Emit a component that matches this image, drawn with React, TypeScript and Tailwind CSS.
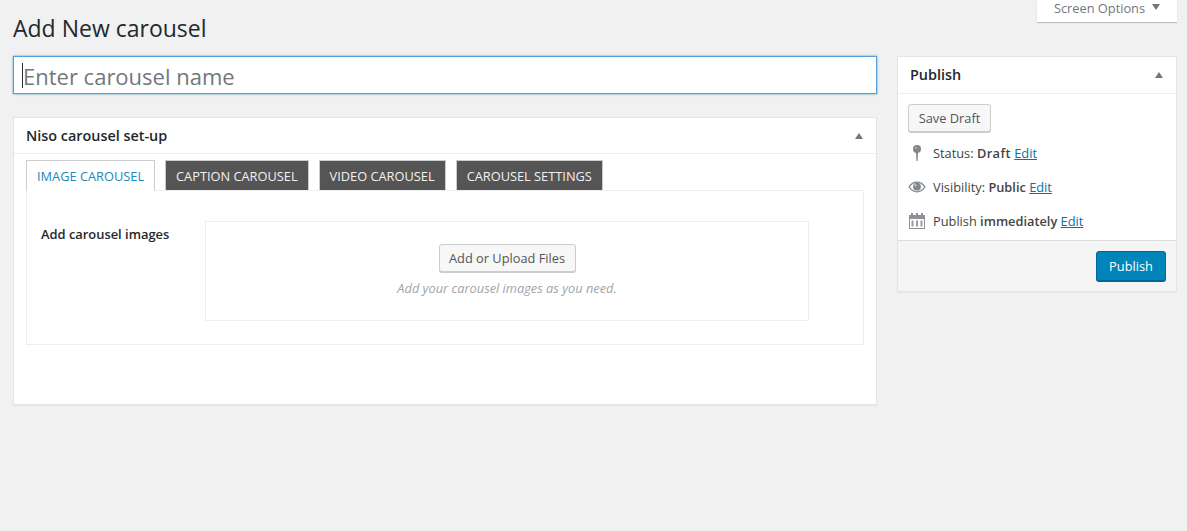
const font = { fontFamily: '"Open Sans", sans-serif' };

function Triangle({ down = false }: { down?: boolean }) {
  return (
    <svg width="8" height="6" viewBox="0 0 8 6" className="block">
      <path d={down ? "M0 0H8L4 6Z" : "M4 0L8 6H0Z"} fill="#72777c" />
    </svg>
  );
}

function PinIcon() {
  return (
    <svg width="8" height="16" viewBox="0 0 8 16">
      <circle cx="4" cy="4" r="4" fill="#82878c" />
      <circle cx="3" cy="2.8" r="0.9" fill="#c4c6c8" />
      <path d="M3 7H5L4.6 16H3.4Z" fill="#82878c" />
    </svg>
  );
}

function EyeIcon() {
  return (
    <svg width="18" height="12" viewBox="0 0 18 12">
      <path d="M0.3 6C2.5 2.4 5.5 0.6 9 0.6S15.5 2.4 17.7 6C15.5 9.6 12.5 11.4 9 11.4S2.5 9.6 0.3 6Z" fill="#82878c" />
      <path d="M1.8 6C3.7 3.3 6.1 1.8 9 1.8S14.3 3.3 16.2 6C14.3 8.7 11.9 10.2 9 10.2S3.7 8.7 1.8 6Z" fill="#fff" />
      <circle cx="9" cy="5.7" r="3.9" fill="#82878c" />
      <circle cx="7.5" cy="4.3" r="1.1" fill="#d5d6d8" />
    </svg>
  );
}

function CalendarIcon() {
  return (
    <svg width="16" height="16" viewBox="0 0 16 16">
      <path d="M0 2H2V0H4V2H7V0H9V2H12V0H14V2H16V16H0Z" fill="#8d9195" />
      <path d="M1 6H15V15H1Z" fill="#fff" />
      <path d="M2.5 7.5H4.5V13.5H2.5ZM7 7.5H9V13.5H7ZM11.5 7.5H13.5V13.5H11.5Z" fill="#9a9ea2" />
    </svg>
  );
}

function TabLink({ label }: { label: string }) {
  return (
    <div className="h-[30px] whitespace-nowrap border border-b-0 border-[#ccc] bg-[#555] px-[10px] text-[12.8px] leading-[30px] text-[#f1f1f1]">
      {label}
    </div>
  );
}

function MiscRow({ icon, children }: { icon: React.ReactNode; children: React.ReactNode }) {
  return (
    <div className="flex h-[34px] items-center text-[12.8px] leading-[18px] text-[#444]">
      <div className="flex w-[25px] shrink-0 justify-center pr-[7px]">{icon}</div>
      <div className="whitespace-pre">{children}</div>
    </div>
  );
}

function EditLink() {
  return <span className="text-[#0073aa] underline">Edit</span>;
}

export default function App() {
  return (
    <div style={font} className="h-[531px] w-[1187px] overflow-hidden bg-[#f1f1f1] text-[#23282d]">
      <div className="flex justify-end pr-[10px]">
        <div className="flex h-[22px] w-[140px] justify-center gap-[7px] bg-white text-[12.8px] leading-[16px] text-[#72777c] shadow-[0_1px_1px_rgba(0,0,0,0.2)]">
          <span>Screen Options</span>
          <div className="pt-[4px]">
            <Triangle down />
          </div>
        </div>
      </div>

      <div className="flex gap-5 pl-[13px] pr-[10px]">
        <div className="w-[864px]">
          <h1 className="h-[34px] text-[23px] leading-[12px] text-[#23282d]">Add New carousel</h1>

          <div className="flex h-[38px] items-center border border-[#5b9dd9] bg-white pl-[8px] text-[22px] text-[#72777c] shadow-[0_0_2px_rgba(30,140,190,0.8)]">
            <span className="mr-[-1px] h-[25px] w-px bg-[#23282d]" />
            <span className="pl-px pt-[2px]">Enter carousel name</span>
          </div>

          <div className="mt-[23px] h-[288px] border border-[#e5e5e5] bg-white shadow-[0_1px_1px_rgba(0,0,0,0.04)]">
            <div className="flex h-[36px] items-center justify-between border-b border-[#eee] pl-[12px] pr-[13px]">
              <h2 className="text-[14.4px] font-semibold text-[#23282d]">Niso carousel set-up</h2>
              <Triangle />
            </div>

            <div className="px-[12px] pt-[6px]">
              <div className="relative z-10 flex gap-[10px]">
                <div className="mb-[-1px] h-[31px] whitespace-nowrap border border-b-0 border-[#ccc] bg-white px-[10px] text-[12.8px] leading-[30px] text-[#2288b5]">
                  IMAGE CAROUSEL
                </div>
                <TabLink label="CAPTION CAROUSEL" />
                <TabLink label="VIDEO CAROUSEL" />
                <TabLink label="CAROUSEL SETTINGS" />
              </div>

              <div className="flex h-[155px] gap-[35px] border border-[#eee] pl-[14px] pt-[30px]">
                <div className="w-[129px] shrink-0 whitespace-nowrap pt-[4px] text-[12.9px] font-semibold leading-[18px] text-[#23282d]">
                  Add carousel images
                </div>
                <div className="flex h-[100px] w-[604px] flex-col items-center border border-[#eee] pt-[22px]">
                  <div className="flex h-[28px] w-[137px] items-center justify-center rounded-[3px] border border-[#ccc] bg-[#f7f7f7] pt-[2px] text-[12.8px] text-[#555] shadow-[0_1px_0_#ccc]">
                    Add or Upload Files
                  </div>
                  <p className="mt-[7px] text-[12.8px] italic leading-[18px] text-[#a0a5aa]">
                    Add your carousel images as you need.
                  </p>
                </div>
              </div>
            </div>
          </div>
        </div>

        <div className="w-[280px] pt-[34px]">
          <div className="h-[236px] border border-[#e5e5e5] bg-white shadow-[0_1px_1px_rgba(0,0,0,0.04)]">
            <div className="flex h-[37px] items-center justify-between border-b border-[#eee] pl-[12px] pr-[13px]">
              <h2 className="pb-[1px] text-[14.4px] font-semibold text-[#23282d]">Publish</h2>
              <Triangle />
            </div>

            <div className="h-[146px] px-[10px] pt-[10px]">
              <div className="flex h-[28px] w-[83px] items-center justify-center rounded-[3px] border border-[#ccc] bg-[#f7f7f7] pt-[2px] text-[12.8px] text-[#555] shadow-[0_1px_0_#ccc]">
                Save Draft
              </div>
              <div className="mt-[4px]">
                <MiscRow icon={<PinIcon />}>
                  Status: <b className="font-semibold tracking-[0.4px]">Draft</b> <EditLink />
                </MiscRow>
                <MiscRow icon={<EyeIcon />}>
                  Visibility: <b className="font-semibold">Public</b> <EditLink />
                </MiscRow>
                <MiscRow icon={<CalendarIcon />}>
                  Publish <b className="font-semibold">immediately</b> <EditLink />
                </MiscRow>
              </div>
            </div>

            <div className="flex h-[51px] items-start justify-end border-t border-[#ddd] bg-[#f5f5f5] pr-[10px] pt-[10px]">
              <div className="flex h-[30px] w-[70px] items-center justify-center rounded-[3px] border border-[#006799] bg-[#0085ba] pt-[2px] text-[12.8px] text-white shadow-[0_1px_0_#006799]">
                Publish
              </div>
            </div>
          </div>
        </div>
      </div>
    </div>
  );
}
